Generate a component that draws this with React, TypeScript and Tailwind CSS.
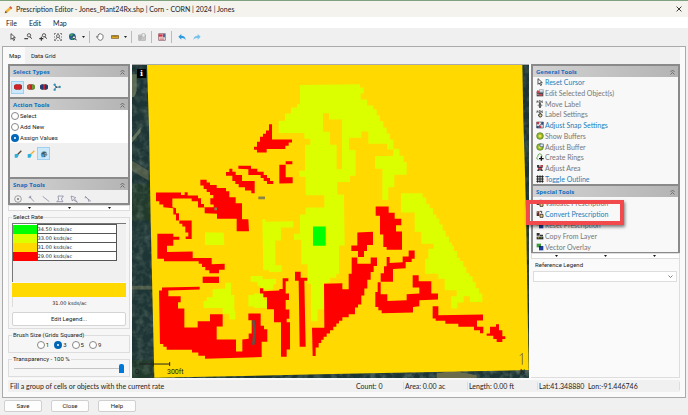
import { useState, type ReactNode } from "react";

type Tool = {
  label: string;
  icon: ReactNode;
  enabled?: boolean;
  highlighted?: boolean;
};

const Icon = ({ children }: { children: ReactNode }) => (
  <svg viewBox="0 0 24 24" className="size-2 shrink-0" aria-hidden="true">
    {children}
  </svg>
);

const CursorIcon = () => (
  <Icon>
    <path d="M6 2v17l4-4 4 8 3-2-4-7h6z" fill="#fff" stroke="#333" strokeWidth="2.5" />
  </Icon>
);

const LensIcon = ({ plus }: { plus?: boolean }) => (
  <Icon>
    <circle cx="15" cy="7" r="5" fill="none" stroke="#333" strokeWidth="2.4" />
    <path d="M18 11l5 6" stroke="#333" strokeWidth="3" />
    <path d={plus ? "M1 17h12M7 11v12" : "M1 17h11"} stroke="#333" strokeWidth="3.4" />
  </Icon>
);

const ExtentsIcon = () => (
  <Icon>
    <path
      d="M1 6V1h5M18 1h5v5M23 18v5h-5M6 23H1v-5"
      fill="none"
      stroke="#444"
      strokeWidth="2"
    />
    <path d="M9 1h6M9 23h6M1 9v6M23 9v6" stroke="#777" strokeWidth="2" />
    <circle cx="12" cy="9" r="4.5" fill="none" stroke="#444" strokeWidth="2.2" />
    <path d="M9 13l-4 7M15 13l4 7" stroke="#444" strokeWidth="2.4" />
  </Icon>
);

const GlobeIcon = () => (
  <Icon>
    <circle cx="10" cy="11" r="10" fill="#1c5f9c" />
    <path d="M3 5q5-4 9-2l-2 5-5 2zM8 13l6 1-2 6-4-2z" fill="#49a942" />
    <circle cx="15" cy="13" r="4.5" fill="#d8ecf8" stroke="#222" strokeWidth="2" />
    <path d="M18 17l5 5" stroke="#222" strokeWidth="3" />
  </Icon>
);

const HandIcon = () => (
  <Icon>
    <path
      d="M6 13V6q2-2 3 0V3q2-2 3 0 2-2 3 1 2-1 3 1 3 0 3 3v7q-2 7-8 7-5 0-8-6l-4-5q1-3 5 2z"
      fill="#fff"
      stroke="#444"
      strokeWidth="2"
    />
  </Icon>
);

const RulerIcon = () => (
  <Icon>
    <path d="M1 8h22v8H1z" fill="#f0b323" stroke="#5a4410" strokeWidth="2" />
    <path d="M6 8v4M10 8v4M14 8v4M18 8v4" stroke="#5a4410" strokeWidth="1.5" />
  </Icon>
);

const ReportIcon = () => (
  <Icon>
    <path d="M2 6h20v16H2z" fill="#ddd" stroke="#999" strokeWidth="2" />
    <path d="M12 2h9v10h-9z" fill="#eee" stroke="#999" strokeWidth="1.5" />
    <path d="M5 10h5v9H5zM13 15h6M13 18h6" fill="#bbb" stroke="#999" strokeWidth="1.5" />
  </Icon>
);

const SaveMapIcon = () => (
  <Icon>
    <path d="M2 2h20v20H2z" fill="#f4eef0" stroke="#745" strokeWidth="2" />
    <path d="M2 4h12v7H2z" fill="#d0303c" />
    <path d="M15 3h6v10h-6z" fill="#4d6b95" />
    <path d="M5 15h13M5 19h13" stroke="#c55" strokeWidth="2" />
  </Icon>
);

const ArrowIcon = ({ redo }: { redo?: boolean }) => (
  <Icon>
    <g transform={redo ? "translate(24 0) scale(-1 1)" : undefined}>
      <path
        d="M10 3v5q12 0 13 13-4-7-13-6v5L1 11z"
        fill={redo ? "#79c3ea" : "#2a9be0"}
      />
    </g>
  </Icon>
);

const EllipseIcon = ({ left, mid, right }: { left: string; mid: string; right: string }) => (
  <Icon>
    <ellipse cx="12" cy="12" rx="10" ry="8" fill={mid} />
    <path d="M9 4a10 8 0 0 0 0 16z" fill={left} />
    <path d="M15 4a10 8 0 0 1 0 16z" fill={right} />
    <ellipse cx="12" cy="12" rx="10" ry="8" fill="none" stroke="#553" strokeWidth="1" />
  </Icon>
);

const NodesIcon = () => (
  <Icon>
    <path d="M5 5l4 8 11-1M9 13l-5 7" fill="none" stroke="#333" strokeWidth="2" />
    <circle cx="5" cy="5" r="3.5" fill="#2d91b8" />
    <circle cx="20" cy="12" r="3.5" fill="#2d91b8" />
    <circle cx="5" cy="20" r="3.5" fill="#2d91b8" />
    <circle cx="10" cy="12" r="2.5" fill="#245" />
  </Icon>
);

const BrushIcon = ({ handle }: { handle: string }) => (
  <Icon>
    <path d="M22 2L10 14" stroke={handle} strokeWidth="4" />
    <path d="M2 13l8-2 4 5-4 7H2z" fill="#29b1dc" />
  </Icon>
);

const BucketIcon = () => (
  <Icon>
    <path d="M4 9q7-9 15-2l3 7-8 8-9-4z" fill="#35566f" />
    <path d="M2 13h10v9H5z" fill="#3aa1d8" />
    <path d="M6 7q6-5 11-1" stroke="#9cb" strokeWidth="2" fill="none" />
    <path d="M13 12l7-2M14 17l6-3" stroke="#e7f1f6" strokeWidth="2" />
  </Icon>
);

const ObjectIcon = () => (
  <Icon>
    <path d="M2 8h20v14H2z" fill="#4a4a55" />
    <path d="M10 2h12v9H10z" fill="#b7c9dc" stroke="#555" />
    <path d="M3 4l8 2-3 7-6-2zM8 15h11v5H8z" fill="#c9454c" />
    <path d="M12 5h8M4 16h4" stroke="#fff" strokeWidth="2" />
  </Icon>
);

const LabelIcon = ({ gear }: { gear?: boolean }) => (
  <Icon>
    <path d="M2 8l2-6 2 6M9 2v6h4V2zM21 3h-4v4h4" fill="none" stroke="#333" strokeWidth="2" />
    {gear ? (
      <>
        <circle cx="13" cy="16" r="5" fill="#e8d5a0" stroke="#333" strokeWidth="3" />
        <path d="M13 9v4M6 16h4" stroke="#333" strokeWidth="2" />
      </>
    ) : (
      <path d="M12 9v14M5 16h14M12 10l-3 3h6zM12 23l-3-3h6z" fill="#333" stroke="#333" strokeWidth="2" />
    )}
  </Icon>
);

const SnapIcon = () => (
  <Icon>
    <path d="M2 3h20v18H2z" fill="#d9dfe8" stroke="#456" strokeWidth="2" />
    <path d="M2 3h7v7H2zM9 14h7v7H9z" fill="#c33a45" />
    <path d="M16 3h6v8h-6zM2 15h6v6H2z" fill="#31538c" />
    <path d="M4 21L20 5" stroke="#333" strokeWidth="2" />
  </Icon>
);

const BufferIcon = ({ edit }: { edit?: boolean }) => (
  <Icon>
    <circle cx="12" cy="12" r="10" fill="#8db92e" stroke="#55761a" strokeWidth="2" />
    <circle cx="12" cy="12" r="4.5" fill="#f4df4e" />
    {edit && <path d="M12 3h10v8H12z" fill="#e9eef5" stroke="#357" strokeWidth="2" />}
  </Icon>
);

const RingsIcon = () => (
  <Icon>
    <path
      d="M7 20q-7-2-4-7 3-2 3-7 3-6 8-3 4 2 4 8"
      fill="none"
      stroke="#4d9a35"
      strokeWidth="2.5"
    />
    <path d="M16 10v13M9 17h14" stroke="#111" strokeWidth="4" />
  </Icon>
);

const AreaIcon = () => (
  <Icon>
    <path d="M3 3h7v5h4V3h7v7l-4 3 4 8h-7l-2-5-2 5H3l4-8-4-3z" fill="#3b3b44" />
    <path d="M13 4h8v5h-8zM6 12h12v4H6z" fill="#d04a55" />
  </Icon>
);

const GridIcon = () => (
  <Icon>
    <path d="M5 1v22M12 1v22M19 1v22M1 5h22M1 12h22M1 19h22" stroke="#222" strokeWidth="3" />
  </Icon>
);

const ConvertIcon = () => (
  <Icon>
    <path d="M2 4h8v14H2z" fill="#5a2a2a" />
    <path d="M3 5h4v5H3z" fill="#e05a30" />
    <path d="M11 4h6v6" fill="none" stroke="#222" strokeWidth="2.5" />
    <path d="M12 13h9v9h-9z" fill="#f4c66a" stroke="#333" strokeWidth="2.5" />
  </Icon>
);

const CopyIcon = () => (
  <Icon>
    <path d="M2 3h9v8H2zM12 8h9v5h-9z" fill="#333" />
    <path d="M2 14h20v8H2z" fill="#222" />
    <path d="M5 16h5v3H5z" fill="#e5c65a" />
    <path d="M13 16h6v3h-6z" fill="#6b9d45" />
  </Icon>
);

const OverlayIcon = () => (
  <Icon>
    <path d="M2 2h13v11H2z" fill="#3b9b3d" />
    <path d="M9 9h13v13H9z" fill="#1b3f94" />
    <path d="M9 9h6v4H9z" fill="#0c2450" />
  </Icon>
);

const generalTools: Tool[] = [
  { label: "Reset Cursor", icon: <CursorIcon />, enabled: true },
  { label: "Edit Selected Object(s)", icon: <ObjectIcon /> },
  { label: "Move Label", icon: <LabelIcon /> },
  { label: "Label Settings", icon: <LabelIcon gear /> },
  { label: "Adjust Snap Settings", icon: <SnapIcon />, enabled: true },
  { label: "Show Buffers", icon: <BufferIcon /> },
  { label: "Adjust Buffer", icon: <BufferIcon edit /> },
  { label: "Create Rings", icon: <RingsIcon /> },
  { label: "Adjust Area", icon: <AreaIcon /> },
  { label: "Toggle Outline", icon: <GridIcon />, enabled: true },
];

const specialTools: Tool[] = [
  { label: "Validate Prescription", icon: <ConvertIcon /> },
  { label: "Convert Prescription", icon: <ConvertIcon />, enabled: true, highlighted: true },
  { label: "Reset Prescription", icon: <OverlayIcon /> },
  { label: "Copy From Layer", icon: <CopyIcon /> },
  { label: "Vector Overlay", icon: <OverlayIcon /> },
];

const rates = [
  { label: "34.50 ksds/ac", swatch: "bg-[#00ff00]" },
  { label: "33.00 ksds/ac", swatch: "bg-[#dcff00]" },
  { label: "31.00 ksds/ac", swatch: "bg-[#ffd900]" },
  { label: "29.00 ksds/ac", swatch: "bg-[#ff0000]" },
];

const PanelHeader = ({ title }: { title: string }) => (
  <div className="flex h-[11px] shrink-0 items-center justify-between bg-linear-to-r from-[#d2d2d2] to-[#b4b4b4] px-[3px]">
    <h2 className="font-['Open_Sans',sans-serif] font-bold text-[#0f6fc0]">{title}</h2>
    <button type="button" aria-label={`Collapse ${title}`}>
      <svg viewBox="0 0 10 12" className="h-[6px] w-[5px]">
        <path d="M1 6l4-4 4 4M1 11l4-4 4 4" fill="none" stroke="#555" strokeWidth="1.5" />
      </svg>
    </button>
  </div>
);

const ScrollStrip = () => (
  <div className="flex h-[6px] items-center justify-around border border-[#ddd] bg-white">
    {[0, 1, 2].map((n) => (
      <svg key={n} viewBox="0 0 6 4" className="h-[2px] w-[3px]">
        <path d="M0 0h6L3 4z" fill="#111" />
      </svg>
    ))}
  </div>
);

const ToolList = ({ tools }: { tools: Tool[] }) => (
  <ul className="grid flex-1 auto-rows-fr px-[3px] font-['Lato',sans-serif] text-[7px]">
    {tools.map((tool) => (
      <li key={tool.label} className="relative flex items-center">
        <button
          type="button"
          disabled={!tool.enabled}
          className="flex items-center gap-px text-[#1a7fb8] disabled:text-[#777]"
        >
          {tool.icon}
          {tool.label}
        </button>
        {tool.highlighted && (
          <span className="pointer-events-none absolute -top-2 -left-[10px] z-10 h-[25px] w-[98px] border-4 border-[#f24a4c] shadow-[1px_2px_3px_rgba(0,0,0,0.5)]" />
        )}
      </li>
    ))}
  </ul>
);

const Radio = ({
  name,
  label,
  checked,
  onSelect,
}: {
  name: string;
  label: string;
  checked: boolean;
  onSelect: () => void;
}) => (
  <label className="flex items-center gap-px">
    <input
      type="radio"
      name={name}
      checked={checked}
      onChange={onSelect}
      className="size-[8px] appearance-none rounded-full border border-[#888] bg-white checked:border-[3px] checked:border-[#0067b8]"
    />
    {label}
  </label>
);

const Separator = () => <span className="mx-px h-3 w-px bg-[#bbb]" />;

const IconButton = ({
  label,
  active,
  children,
}: {
  label: string;
  active?: boolean;
  children: ReactNode;
}) => (
  <button
    type="button"
    aria-label={label}
    className={
      active
        ? "flex size-[13px] items-center justify-center border border-[#9fd0f2] bg-[#cce8fb]"
        : "flex size-[13px] items-center justify-center"
    }
  >
    {children}
  </button>
);

const Caret = () => (
  <svg viewBox="0 0 6 4" className="mx-px h-[2px] w-[3px]">
    <path d="M0 0h6L3 4z" fill="#222" />
  </svg>
);

const FieldMap = () => (
  <svg
    viewBox="6 12 1191 942"
    preserveAspectRatio="none"
    className="absolute inset-0 size-full"
    role="img"
    aria-label="Prescription map"
  >
    <defs>
      <filter id="ground" x="0" y="0" width="1" height="1">
        <feTurbulence type="fractalNoise" baseFrequency="0.05" numOctaves="3" seed="4" />
        <feColorMatrix values="0 0 0 0 0.32  0 0 0 0 0.4  0 0 0 0 0.32  1.8 0 0 0 -0.7" />
      </filter>
    </defs>

    {/* aerial photo round the field */}
    <rect x="6" y="12" width="1191" height="942" fill="#1d3535" />
    <path d="M6 40h14v50l-8 18H6zM6 230l26-30v14L6 246z" fill="#5d6c56" />
    <path d="M6 300l50 30v30L6 330zM6 676h70v12H6z" fill="#4e5a48" />
    <path d="M6 370h60v110H6zM6 900h80v54H6z" fill="#213a2c" />
    <rect x="6" y="12" width="80" height="942" filter="url(#ground)" opacity="0.35" />
    <rect x="1160" y="12" width="37" height="942" filter="url(#ground)" opacity="0.35" />
    <rect x="70" y="920" width="1127" height="34" filter="url(#ground)" opacity="0.5" />
    <path d="M920 940l50-8 70 14v8H920z" fill="#6a6c4c" />

    <path d="M51 12H1177L1180 180L1184 300L1188 450L1196 930L570 943L73 953L62 480L57 200Z" fill="#ffd900" />

    {/* 33.00 */}
    <g fill="#dcff00">
      <path
        fillRule="evenodd"
        d="M510 72L690 70V80H701V98H692V116H711V134H730V145H740V163H750V181H760V200H770V218H780V236H790V264H808V285H821V304H830V342H793V380H775V418H757V324H735V287L790 285V266H771V249H715V212H694V231H657V268H677V345H660V364H622V402H642L644 555H627V640H619V652H600V666L581 668V748H563V783H543V670H533V612H514V538H492V520H510V462H527V441H583V404H527V348H508V330H525V252H541V234H523V217H446V180H465V158H483V140H501V130H510ZM579 157H597V176H636V326H620V252H600V213H579Z"
      />
      <path d="M813 398H878V411H889V430H899V443H909V462H919V474H928V492H938V510H947V528H957V546H966V556H972V572H981V592H990V602H1000V620H1009V638H1018V648H1028V665H1037V684H1047V700H1057V725H1020V708H1001V727H982V745H964V708H980V690H944V655H925V640H886V595H895V565H911V550H874V514H854V456H813Z" />
      <path d="M225 515L281 517L283 554H225ZM397 476H406V484L490 482V501H453V540H436V615H455V635H417V630H400Z" />
      <path d="M362 647H398V657L438 655V672H430V688H402V720H410V743H373V739H355V704H372V700H392V678H383V664H362Z" />
      <path d="M286 667H303V704H313V752H316V778H298V761H278V743H221V722H230V711H248V687L286 685Z" />
    </g>

    <path d="M549 498H587V556H549Z" fill="#00ff00" />

    {/* 29.00 */}
    <g fill="#ff0000">
      <path d="M417 190H426V236H486V245H476V255H466V265H410V275H381V267H372V258H381V243H390V228H399V219H408V209H417Z" />
      <path d="M467 302H487V311H467V350H488V368L448 369V312H467Z" />
      <path d="M325 315H363V324H382V333H401V343H411V352H420V361H430V370H411V361H401V352H392V343H355V326L325 324Z" />
      <path d="M298 324H307V333H317V343H336V361H374V398H364V390H345V380H326V370H316V361H307V345H288V334H298Z" />
      <path d="M78 396H153V403H164V395H173V405H204V413H213V430H222V440H251V432H241V413H250V403H240V394H230V385H221V375H211V357H230V366H240V373H260V382H288V392H298V410H317V428H336V476H355L357 512H320V475H261V460L224 458V441H204V422H185V414H127V440L138 443V458H147V480H185V536H167V528H175V516H166V498H157V490H148V480H138V462H130V443L100 440V432H88V422H78Z" />
      <path d="M82 520H130V529H148V538H130V556H111V575L188 573V593H245V612L284 610V628H267V639H238V630H226V620H216V610H206V603H102V595H82Z" />
      <path d="M218 649H267V668H218Z" />
      <path d="M96 682L209 679V688L115 691V708H152V726H144V745H163V802H203V783H240V762H278V799H260V838H318V874H337V838L356 836V820H365V780H355V760H392V797H402V807H412V845H395V891L225 896V887H205V877H186V869H110V860H100V852H90L87 691H96Z" />
      <path d="M390 684H400V693L448 691V686H458V654H475V663H467V700H477V719H467V748H478V776H470V786H480V868H470V890H453V786H432V747H411V711H400V700H390Z" />
      <path d="M495 634H512V652H532V661H523L527 860H509L506 661H495Z" />
      <path d="M582 670L637 669V687H656V640H665V591H682V610H722V591H741V617H731V635H722V658H712V685H703V706H694V733H684V742H675V762H656V771H637V782H627V790H619V800H610V810H600V820H590V830H581V839H574V849H566V862H557V888H548L546 803H583Z" />
      <path d="M682 516L729 514V554H711V572H702V590H684V572H664V555H682Z" />
      <path d="M737 438H776V457H794V475H814V494H798V513H816V568H770V560H760V522H750V466H737Z" />
      <path d="M836 570H854V595H845V605H827V624L789 626V664H752V639H762V618H770V590H779V608L818 606V588H836Z" />
      <path d="M743 666H752V702H772V722L830 720V702L868 700V682H848V645H866V663H904V700H924V718L868 720V738L849 740V757L755 759V750H745V740H736V695H743Z" />
      <path d="M908 738H925V765L1059 763V781H1041V800H1060V819H1050V810H1032V800H985V791H946V782H917V775H908Z" />
      <path d="M1080 800H1098V792H1107V810H1117V828H1126V837H1117V846H1100V837H1090V827H1070V820H1080Z" />
    </g>

    <path d="M366 780h8l4 30-4 44h-8l4-40z" fill="#5d5547" />
    <path d="M385 408h20v8h-20zM253 441h8v8h-8z" fill="#8b8447" />
    <path d="M27 912H119M119 906V918" stroke="#222" strokeWidth="3" fill="none" />
    <path d="M1170 887l7-7v34" stroke="#444" strokeWidth="2" fill="none" />
  </svg>
);

const GroupBox = ({ title, children }: { title: string; children: ReactNode }) => (
  <fieldset className="border border-[#ddd] px-[3px] pb-[2px]">
    <legend className="px-px">{title}</legend>
    {children}
  </fieldset>
);

const App = () => {
  const [action, setAction] = useState("Assign Values");
  const [brush, setBrush] = useState("3");
  const [transparency, setTransparency] = useState(100);

  return (
    <div className="flex min-h-screen flex-col border-t border-[#7fa27f] bg-[#f0f0f0] font-['Roboto','Open_Sans',sans-serif] text-[6px] leading-[8px] text-[#1c1c1c]">
      <header className="flex h-4 items-center gap-[3px] bg-[#f4f3ee] pr-[6px] pl-1">
        <svg viewBox="0 0 24 24" className="size-[9px]" aria-hidden="true">
          <path d="M2 22l2-7L17 3l5 5L9 20z" fill="#f2b632" />
          <path d="M17 3l5 5-3 3-5-5z" fill="#d9534f" />
          <path d="M2 22l2-7 5 5z" fill="#6d5a45" />
        </svg>
        <h1 className="flex-1 font-['Lato',sans-serif] text-[7px]">
          Prescription Editor - Jones_Plant24Rx.shp | Corn - CORN | 2024 | Jones
        </h1>
        <button type="button" aria-label="Close window">
          <svg viewBox="0 0 10 10" className="size-[6px]">
            <path d="M1 1l8 8M9 1l-8 8" stroke="#222" strokeWidth="1.5" />
          </svg>
        </button>
      </header>

      <nav className="flex h-[11px] items-center gap-3 bg-white px-[6px] font-['Lato',sans-serif] text-[7px]">
        <button type="button">File</button>
        <button type="button">Edit</button>
        <button type="button">Map</button>
      </nav>

      <div className="flex h-[18px] items-center gap-[2px] px-[6px]">
        <IconButton label="Select"><CursorIcon /></IconButton>
        <IconButton label="Zoom out"><LensIcon /></IconButton>
        <IconButton label="Zoom in"><LensIcon plus /></IconButton>
        <IconButton label="Zoom to extents"><ExtentsIcon /></IconButton>
        <IconButton label="Zoom to layer"><GlobeIcon /></IconButton>
        <Caret />
        <Separator />
        <IconButton label="Pan"><HandIcon /></IconButton>
        <IconButton label="Measure"><RulerIcon /></IconButton>
        <Caret />
        <Separator />
        <IconButton label="Report"><ReportIcon /></IconButton>
        <Separator />
        <IconButton label="Save map"><SaveMapIcon /></IconButton>
        <Separator />
        <IconButton label="Undo"><ArrowIcon /></IconButton>
        <IconButton label="Redo"><ArrowIcon redo /></IconButton>
      </div>

      <main className="mx-[2px] flex flex-1 flex-col border border-[#aaa] bg-[#fafafa] px-[5px] pb-[5px]">
        <div role="tablist" className="flex h-[17px] items-center gap-[6px] bg-[#f0f0f0]">
          <button type="button" role="tab" aria-selected="true" className="h-full bg-[#fafafa] pr-1 pl-px">
            Map
          </button>
          <button type="button" role="tab" aria-selected="false">
            Data Grid
          </button>
        </div>

        <div className="grid flex-1 grid-cols-[122px_1fr_149px] gap-[2px]">
          <aside className="flex flex-col bg-[#f6f6f6]">
            <div className="flex h-[141px] flex-col overflow-hidden border-2 border-[#8a8a8a] bg-[#f0f0f0]">
              <PanelHeader title="Select Types" />
              <div className="flex h-5 shrink-0 items-center px-px">
                <IconButton label="Polygon" active>
                  <EllipseIcon left="#d4202a" mid="#d4202a" right="#d4202a" />
                </IconButton>
                <IconButton label="Split">
                  <EllipseIcon left="#cf4a2a" mid="#c8202a" right="#6f9a3a" />
                </IconButton>
                <IconButton label="Island">
                  <EllipseIcon left="#1d3a7c" mid="#c8202a" right="#1d3a7c" />
                </IconButton>
                <IconButton label="Points"><NodesIcon /></IconButton>
              </div>
              <div className="border-t-2 border-[#8a8a8a]">
                <PanelHeader title="Action Tools" />
              </div>
              <div className="flex h-[33px] shrink-0 flex-col justify-around bg-white px-px">
                {["Select", "Add New", "Assign Values"].map((name) => (
                  <Radio
                    key={name}
                    name="action"
                    label={name}
                    checked={action === name}
                    onSelect={() => setAction(name)}
                  />
                ))}
              </div>
              <div className="flex h-[34px] shrink-0 items-start px-px pt-1">
                <IconButton label="Brush"><BrushIcon handle="#5d4636" /></IconButton>
                <IconButton label="Pencil"><BrushIcon handle="#f0b030" /></IconButton>
                <IconButton label="Fill" active><BucketIcon /></IconButton>
              </div>
              <div className="border-t-2 border-[#8a8a8a]">
                <PanelHeader title="Snap Tools" />
              </div>
              <div className="flex shrink-0 items-center px-px pt-[5px]">
                <span className="px-[3px]">
                  <Icon>
                    <circle cx="12" cy="12" r="10" fill="none" stroke="#777" strokeWidth="2" />
                    <circle cx="12" cy="12" r="3" fill="#777" />
                  </Icon>
                </span>
                {[
                  "M4 4l14 16M2 8h6V2",
                  "M2 4l20 16",
                  "M6 3h16l-6 9 5 8H2l6-5z",
                  "M3 3l14 5-4 3 9 11-12-8-3 4z",
                  "M3 3l9 9 3 9M12 12l9 7M2 8h7",
                ].map((d) => (
                  <span key={d} className="px-[3px]">
                    <Icon>
                      <path d={d} fill="none" stroke="#779" strokeWidth="2" />
                    </Icon>
                  </span>
                ))}
              </div>
            </div>
            <ScrollStrip />

            <div className="mt-[2px] flex flex-col gap-[2px]">
              <GroupBox title="Select Rate">
                <div className="mt-[2px] h-[59px] border-t border-l border-[#777] bg-[#f0f0f0]">
                  <table className="w-[104px] border-collapse bg-white font-['DejaVu_Sans',sans-serif] text-[5px] leading-[8px]">
                    <tbody>
                      {rates.map((rate) => (
                        <tr key={rate.label}>
                          <td className={`w-6 ${rate.swatch}`} />
                          <td className="border border-[#555] p-0">{rate.label}</td>
                        </tr>
                      ))}
                    </tbody>
                  </table>
                </div>
                <div className="mt-px h-[14px] bg-[#ffd900]" />
                <p className="border-l border-[#ddd] pt-[2px] text-center font-['DejaVu_Sans',sans-serif] text-[5px]">
                  31.00 ksds/ac
                </p>
                <button
                  type="button"
                  className="mt-[5px] h-[14px] w-full rounded-[2px] border border-[#d4d4d4] bg-white"
                >
                  Edit Legend...
                </button>
              </GroupBox>
              <GroupBox title="Brush Size (Grids Squared)">
                <div className="flex h-[11px] items-center justify-center gap-[5px]">
                  {["1", "3", "5", "9"].map((size) => (
                    <Radio
                      key={size}
                      name="brush"
                      label={size}
                      checked={brush === size}
                      onSelect={() => setBrush(size)}
                    />
                  ))}
                </div>
              </GroupBox>
              <GroupBox title={`Transparency - ${transparency} %`}>
                <input
                  type="range"
                  aria-label="Transparency"
                  value={transparency}
                  onChange={(event) => setTransparency(Number(event.target.value))}
                  className="block h-[11px] w-full appearance-none bg-transparent px-[2px] [&::-webkit-slider-runnable-track]:h-px [&::-webkit-slider-runnable-track]:bg-[#c4c4c4] [&::-webkit-slider-thumb]:-mt-1 [&::-webkit-slider-thumb]:h-[9px] [&::-webkit-slider-thumb]:w-[5px] [&::-webkit-slider-thumb]:appearance-none [&::-webkit-slider-thumb]:rounded-t-[2px] [&::-webkit-slider-thumb]:bg-[#0078d7]"
                />
              </GroupBox>
            </div>
          </aside>

          <section className="relative overflow-hidden border-t border-[#aaa]">
            <FieldMap />
            <button
              type="button"
              className="absolute top-1 left-[5px] size-[9px] bg-black text-center font-['DejaVu_Serif',serif] text-[8px] leading-[9px] font-bold text-white"
            >
              i
            </button>
            <span className="absolute bottom-[2px] left-[3px] text-[7px]">0</span>
            <span className="absolute bottom-[2px] left-[35px] text-[7px]">300ft</span>
            <span className="absolute right-1 bottom-[2px] text-[7px]">N</span>
          </section>

          <aside className="flex flex-col">
            <div className="flex h-[122px] flex-col border-2 border-[#8a8a8a] bg-[#f8f8f8]">
              <PanelHeader title="General Tools" />
              <ToolList tools={generalTools} />
            </div>
            <div className="flex h-[67px] flex-col border-x-2 border-b border-[#8a8a8a] bg-[#f8f8f8]">
              <PanelHeader title="Special Tools" />
              <ToolList tools={specialTools} />
            </div>
            <ScrollStrip />
            <div className="flex flex-1 flex-col border-r border-b border-[#ddd] bg-[#fafafa] px-[2px] pt-[2px]">
              <label htmlFor="reference-legend" className="px-[2px]">
                Reference Legend
              </label>
              <div className="relative mt-[2px]">
                <select
                  id="reference-legend"
                  className="block h-[11px] w-full appearance-none border border-[#ddd] bg-white"
                />
                <svg viewBox="0 0 10 6" className="pointer-events-none absolute top-1 right-1 h-[3px] w-[5px]">
                  <path d="M1 1l4 4 4-4" fill="none" stroke="#555" strokeWidth="1.5" />
                </svg>
              </div>
            </div>
          </aside>
        </div>

        <div className="mt-[2px] flex h-[12px] items-center bg-[#f0f0f0] font-['Lato',sans-serif] text-[7px]">
          <span className="flex-1 pl-[2px]">Fill a group of cells or objects with the current rate</span>
          <span className="w-[47px]">Count: 0</span>
          <span className="w-[64px] border-l border-[#ddd] pl-px">Area: 0.00 ac</span>
          <span className="w-[70px] border-l border-[#ddd] pl-px">Length: 0.00 ft</span>
          <span className="w-[143px] border-x border-[#ddd] pl-px whitespace-pre">Lat:41.348880  Lon:-91.446746</span>
        </div>
      </main>

      <footer className="flex h-[17px] items-center gap-[9px] px-1 pb-px">
        {["Save", "Close", "Help"].map((name) => (
          <button
            key={name}
            type="button"
            className="h-[12px] w-[38px] rounded-[2px] border border-[#d0d0d0] bg-[#fdfdfd]"
          >
            {name}
          </button>
        ))}
      </footer>
    </div>
  );
};

export default App;
